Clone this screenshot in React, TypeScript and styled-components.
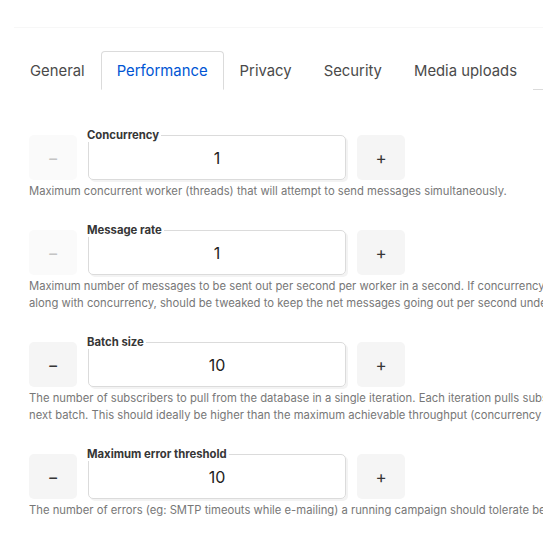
import React from "react";
import styled, { createGlobalStyle } from "styled-components";

const GlobalStyle = createGlobalStyle`
  html, body {
    margin: 0;
    padding: 0;
    background: #fff;
    overflow: hidden;
  }
  body {
    font-family: Inter, "Noto Sans", sans-serif;
    color: #363636;
  }
`;

const Page = styled.div`
  width: 1200px;
  padding-left: 14px;
`;

const TopRule = styled.div`
  height: 27px;
  border-bottom: 1px solid #f7f7f7;
`;

const TabBar = styled.ul`
  display: flex;
  margin: 23px 0 0;
  padding: 0;
  list-style: none;
  border-bottom: 1px solid #dbdbdb;
`;

const Tab = styled.li<{ $active?: boolean }>`
  padding: 0 15px;
  height: 37px;
  display: flex;
  align-items: center;
  font-size: 14.85px;
  color: ${(p) => (p.$active ? "#0055d4" : "#4a4a4a")};
  border: 1px solid ${(p) => (p.$active ? "#dbdbdb" : "transparent")};
  border-bottom-color: ${(p) => (p.$active ? "#fff" : "transparent")};
  border-radius: 4px 4px 0 0;
  margin-bottom: -1px;
  background: #fff;
`;

const Content = styled.div`
  padding: 45px 15px 0;
`;

const Field = styled.div`
  margin-bottom: 30px;
`;

const Row = styled.div`
  display: flex;
  gap: 11px;
  align-items: stretch;
`;

const StepButton = styled.button<{ $disabled?: boolean }>`
  width: 48px;
  height: 45px;
  border: none;
  border-radius: 5px;
  background: ${(p) => (p.$disabled ? "#fafafa" : "#f5f5f5")};
  color: ${(p) => (p.$disabled ? "#c4c4c4" : "#363636")};
  font-family: Inter, sans-serif;
  font-size: 17px;
  padding: 0;
  display: flex;
  align-items: center;
  justify-content: center;
`;

const InputBox = styled.div`
  position: relative;
  width: 258px;
  height: 45px;
  box-sizing: border-box;
  border: 1px solid #dbdbdb;
  border-radius: 5px;
  box-shadow: 2px 2px 0 #f3f3f3;
  display: flex;
  align-items: center;
  justify-content: center;
  font-size: 16px;
  color: #222;
`;

const Legend = styled.label`
  position: absolute;
  top: -8px;
  left: -2px;
  background: #fff;
  padding-right: 2px;
  font-size: 11.3px;
  font-weight: 700;
  line-height: 14px;
  color: #363636;
`;

const Help = styled.p`
  margin: 3px 0 0;
  font-size: 11.25px;
  line-height: 17px;
  color: #777;
`;

const HelpLine = styled.span`
  display: block;
  white-space: nowrap;
`;

type Setting = {
  label: string;
  value: number;
  minDisabled: boolean;
  help: string[];
};

const settings: Setting[] = [
  {
    label: "Concurrency",
    value: 1,
    minDisabled: true,
    help: ["Maximum concurrent worker (threads) that will attempt to send messages simultaneously."],
  },
  {
    label: "Message rate",
    value: 1,
    minDisabled: true,
    help: [
      "Maximum number of messages to be sent out per second per worker in a second. If concurrency = 10 and message rate = 10, then up to 10x10=100 messages may be pushed out every second. This,",
      "along with concurrency, should be tweaked to keep the net messages going out per second under the target message servers rate limits if any.",
    ],
  },
  {
    label: "Batch size",
    value: 10,
    minDisabled: false,
    help: [
      "The number of subscribers to pull from the database in a single iteration. Each iteration pulls subscribers from the database, sends messages to them, and then moves on to the",
      "next batch. This should ideally be higher than the maximum achievable throughput (concurrency * message rate).",
    ],
  },
  {
    label: "Maximum error threshold",
    value: 10,
    minDisabled: false,
    help: [
      "The number of errors (eg: SMTP timeouts while e-mailing) a running campaign should tolerate before it is paused for manual investigation or intervention. Set to 0 to never pause.",
    ],
  },
];

const tabs = ["General", "Performance", "Privacy", "Security", "Media uploads"];

export default function App() {
  return (
    <>
      <GlobalStyle />
      <Page>
        <TopRule />
        <TabBar>
          {tabs.map((t) => (
            <Tab key={t} $active={t === "Performance"}>
              {t}
            </Tab>
          ))}
        </TabBar>
        <Content>
          {settings.map((s) => (
            <Field key={s.label}>
              <Row>
                <StepButton $disabled={s.minDisabled}>−</StepButton>
                <InputBox>
                  <Legend>{s.label}</Legend>
                  {s.value}
                </InputBox>
                <StepButton>+</StepButton>
              </Row>
              <Help>
                {s.help.map((line) => (
                  <HelpLine key={line}>{line}</HelpLine>
                ))}
              </Help>
            </Field>
          ))}
        </Content>
      </Page>
    </>
  );
}
